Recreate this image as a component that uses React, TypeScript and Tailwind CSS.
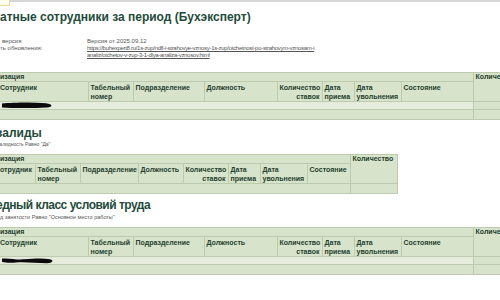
import React from "react";

type Col = { label: React.ReactNode; w: number; right?: boolean };

const wide: Col[] = [
  { label: "Сотрудник", w: 88 },
  { label: <>Табельный<br />номер</>, w: 45 },
  { label: "Подразделение", w: 71 },
  { label: "Должность", w: 73 },
  { label: <>Количество<br />ставок</>, w: 45, right: true },
  { label: <>Дата<br />приема</>, w: 32 },
  { label: <>Дата<br />увольнения</>, w: 47 },
  { label: "Состояние", w: 72 },
];

const narrow: Col[] = [
  { label: "отрудник", w: 35 },
  { label: <>Табельный<br />номер</>, w: 45 },
  { label: "Подразделение", w: 58 },
  { label: "Должность", w: 45 },
  { label: <>Количество<br />ставок</>, w: 45, right: true },
  { label: <>Дата<br />приема</>, w: 32 },
  { label: <>Дата<br />увольнения</>, w: 47 },
  { label: "Состояние", w: 43 },
];

function Scribble({ wavy }: { wavy?: boolean }) {
  return (
    <svg width="52" height="7" viewBox="0 0 52 9" preserveAspectRatio="none" className="block">
      {wavy ? (
        <path
          d="M0 2 C8 1 14 4 22 3 C32 2 40 1 48 3 C52 4 51 8 45 8 C34 8 24 6 14 7 C8 8 3 7 0 6 Z"
          fill="#0b0b0b"
        />
      ) : (
        <path
          d="M0 2 C10 1 28 0 44 1.5 C51 2.5 51 6.5 45 7 C30 8 12 8 0 7 Z"
          fill="#0b0b0b"
        />
      )}
    </svg>
  );
}

function Report({
  cols,
  org,
  last,
  lastW,
  rows,
}: {
  cols: Col[];
  org: string;
  last: string;
  lastW: number;
  rows: { tone: "light" | "dark"; scribble?: boolean; wavy?: boolean }[];
}) {
  const cell = "border border-[#bccab0] px-[2px] align-top overflow-hidden whitespace-nowrap";
  return (
    <table
      className="table-fixed border-collapse bg-[#d7e3cb] text-[7px] leading-[8px] font-bold text-[#253f2e]"
      style={{ width: cols.reduce((s, c) => s + c.w, 0) + lastW }}
    >
      <colgroup>
        {cols.map((c, i) => (
          <col key={i} style={{ width: c.w }} />
        ))}
        <col style={{ width: lastW }} />
      </colgroup>
      <tbody>
        <tr className="h-[9px]">
          <td colSpan={cols.length} className={`${cell} border-l-0 pl-0`}>
            {org}
          </td>
          <td rowSpan={2} className={cell}>
            {last}
          </td>
        </tr>
        <tr className="h-[19px]">
          {cols.map((c, i) => (
            <td
              key={i}
              className={`${cell} pt-[1px] leading-[9px] ${i === 0 ? "border-l-0 pl-0" : ""} ${c.right ? "text-right" : ""}`}
            >
              {c.label}
            </td>
          ))}
        </tr>
        {rows.map((r, i) => (
          <tr key={i} className={r.tone === "light" ? "h-[8px]" : "h-[10px]"}>
            <td
              colSpan={cols.length}
              className={`${cell} border-l-0 p-0 ${r.tone === "light" ? "bg-[#e5ecdc]" : ""}`}
            >
              {r.scribble ? <Scribble wavy={r.wavy} /> : null}
            </td>
            <td className={`${cell} p-0`}></td>
          </tr>
        ))}
      </tbody>
    </table>
  );
}

export default function App() {
  return (
    <div
      className="relative w-[500px] h-[300px] overflow-hidden bg-white"
      style={{ fontFamily: '"Liberation Sans", Arial, sans-serif' }}
    >
      <div className="h-[2px] bg-[#d6d6d6]" />
      <div className="absolute left-0 top-0 w-[10px] h-[6px] bg-[#fffdf0] border-r border-b border-[#eadb9a]" />

      <h1 className="mt-[8px] h-[14px] text-[12px] leading-[14px] font-bold text-[#1f4b3b] whitespace-nowrap">
        атные сотрудники за период (Бухэксперт)
      </h1>

      <div className="mt-[14px] grid grid-cols-[87px_1fr] text-[6px] leading-[7px] text-[#555]">
        <div className="pl-[2px]">версия</div>
        <div>Версия от 2025.09.12</div>
        <div>ть обновления:</div>
        <div className="underline tracking-[-0.3px]">
          https://buhexpert8.ru/1s-zup/ndfl-i-strahovye-vznosy-1s-zup/otchetnost-po-strahovym-vznosam-i
          <br />
          analiz/otchetov-v-zup-3-1-dlya-analiza-vznosov.html
        </div>
      </div>

      <div className="mt-[13px]">
        <Report
          cols={wide}
          org="изация"
          last="Количество"
          lastW={60}
          rows={[{ tone: "light", scribble: true }, { tone: "dark" }]}
        />
      </div>

      <h2 className="mt-[7px] -ml-[5px] h-[13px] text-[12px] leading-[13px] font-bold text-[#1f4b3b] whitespace-nowrap">
        валиды
      </h2>
      <div className="-ml-[6px] text-[5px] leading-[8px] text-[#555] whitespace-nowrap">
        нвалидность Равно "Да"
      </div>

      <div className="mt-[6px]">
        <Report cols={narrow} org="изация" last="Количество" lastW={47} rows={[{ tone: "dark" }]} />
      </div>

      <h2 className="mt-[5px] -ml-[4px] h-[13px] text-[12px] leading-[13px] font-bold text-[#1f4b3b] tracking-[-0.5px] whitespace-nowrap">
        едный класс условий труда
      </h2>
      <div className="mt-[1px] text-[5.5px] leading-[8px] text-[#555] whitespace-nowrap">
        д занятости Равно "Основное место работы"
      </div>

      <div className="mt-[6px]">
        <Report
          cols={wide}
          org="изация"
          last="Количество"
          lastW={60}
          rows={[{ tone: "light", scribble: true, wavy: true }, { tone: "dark" }]}
        />
      </div>
    </div>
  );
}
